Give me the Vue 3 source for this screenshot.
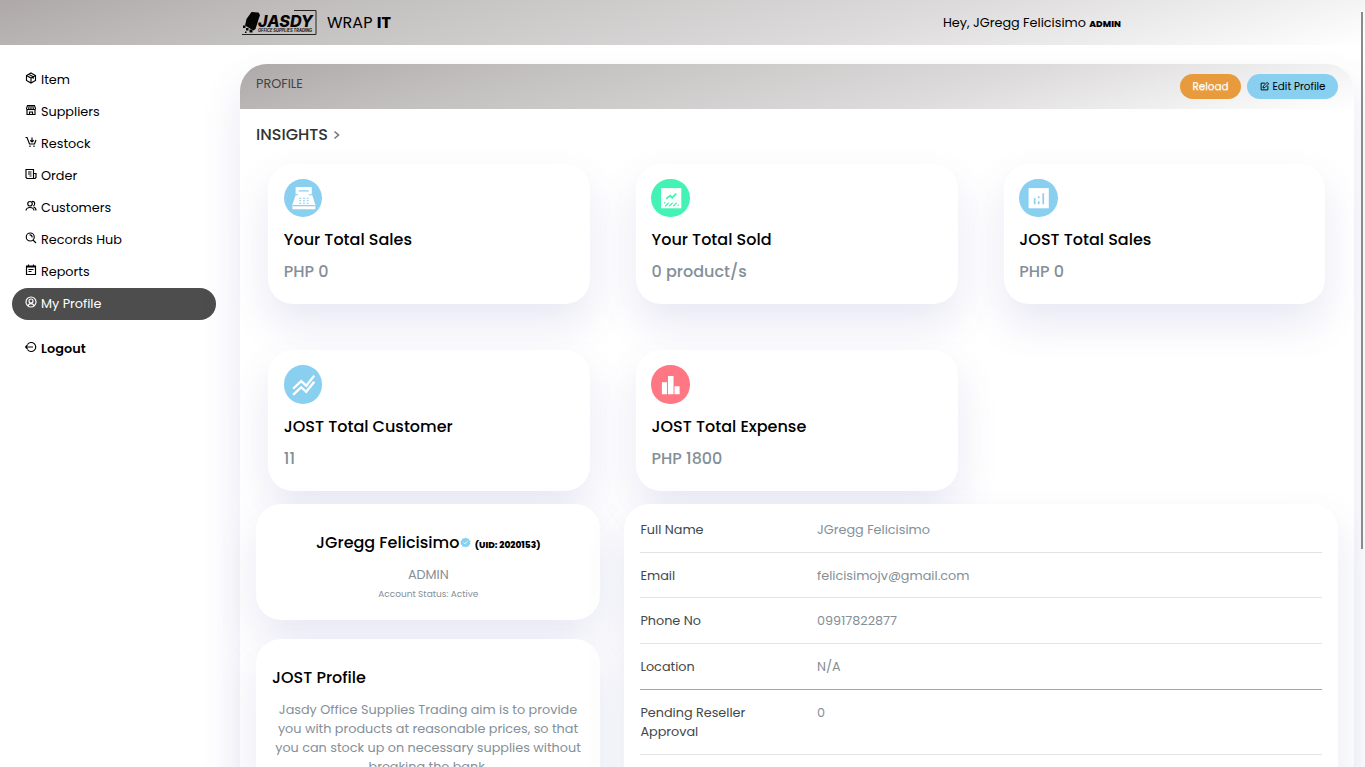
<script setup>
const nav = [
  { label: 'Item', icon: 'box' },
  { label: 'Suppliers', icon: 'store' },
  { label: 'Restock', icon: 'cart' },
  { label: 'Order', icon: 'news' },
  { label: 'Customers', icon: 'users' },
  { label: 'Records Hub', icon: 'search' },
  { label: 'Reports', icon: 'report' },
  { label: 'My Profile', icon: 'user', active: true },
]
const icons = {
  box: 'M12 2 21 7v10l-9 5-9-5V7zM3 7l9 5 9-5M12 12v10M7.500 4.500l9 5v4',
  store: 'M5 3h14l2 6c0 3-4 3-4.500 0 0 3-4.500 3-4.500 0 0 3-4.500 3-4.500 0C7 12 3 12 3 9zM4 12v9h16v-9M9 21v-5h6v5M8.500 3 7.500 9M15.500 3l1 6M12 3v6',
  cart: 'M1 3h3l5 13h10l3-8M14 3v9M10.500 8.500 14 12l3.500-3.500M10 19v3M18 19v3',
  news: 'M2 3h15v18H4l-2-2zM17 11h5v8l-2 2h-5M6 8h7M6 12h7M9 16h4',
  users: 'M10 3a4.500 4.500 0 1 0 0 9 4.500 4.500 0 0 0 0-9M2 21c1-8 15-8 16 0M14 3c6-1 7 6 3 9M17 14c4 1 5 4 5 7',
  search: 'M10.500 2a8 8 0 1 0 0 16 8 8 0 0 0 0-16M16.500 16.500 22 22M9 6c3-1 6 2 5 5',
  report: 'M3 4h18v17H3zM7 1v5M17 1v5M4 6h16M7 11h10M7 15h6',
  user: 'M12 2a10 10 0 1 0 0 20 10 10 0 0 0 0-20M12 6a4 4 0 1 0 0 8 4 4 0 0 0 0-8M6 19c2-5 10-5 12 0',
}
const stats = [
  { title: 'Your Total Sales', value: 'PHP 0', icon: 'register', tone: 'blue' },
  { title: 'Your Total Sold', value: '0 product/s', icon: 'trend', tone: 'green' },
  { title: 'JOST Total Sales', value: 'PHP 0', icon: 'analytics', tone: 'blue' },
  { title: 'JOST Total Customer', value: '11', icon: 'lines', tone: 'blue' },
  { title: 'JOST Total Expense', value: 'PHP 1800', icon: 'bars', tone: 'red' },
]
const details = [
  { label: 'Full Name', value: 'JGregg Felicisimo' },
  { label: 'Email', value: 'felicisimojv@gmail.com' },
  { label: 'Phone No', value: '09917822877' },
  { label: 'Location', value: 'N/A', accent: true },
  { label: 'Pending Reseller Approval', value: '0' },
]
</script>

<template>
  <div class="page">
    <header class="topbar">
      <svg class="logo" viewBox="0 0 76 28">
        <path d="M53 1.500h22v24H1" fill="none" stroke="#222" stroke-width="1" />
        <path d="m5.500 10 5-7 7 .5L19 6l-4.500 14-2 1.500L4 16.500z" fill="#050505" />
        <path d="M2 16.500h2.500V19H2zM5 19h2.500v2.500H5zM8.500 20.500h3v3h-3zM4 22.500h1.500V24H4z" fill="#050505" />
        <text x="17" y="17.500" textLength="55" lengthAdjust="spacingAndGlyphs" class="logo-name">JASDY</text>
        <text x="17" y="23.300" textLength="54" lengthAdjust="spacingAndGlyphs" class="logo-sub">OFFICE SUPPLIES TRADING</text>
      </svg>
      <div class="brand">WRAP <b>IT</b></div>
      <div class="hello">Hey, JGregg Felicisimo <b>ADMIN</b></div>
    </header>

    <div class="main">
      <nav class="side">
        <a v-for="n in nav" :key="n.label" class="link" :class="{ active: n.active }">
          <svg viewBox="0 0 24 24"><path :d="icons[n.icon]" /></svg><span>{{ n.label }}</span>
        </a>
        <a class="link logout">
          <svg viewBox="0 0 24 24"><path d="M5 7a9 9 0 1 1 0 10M1 12h15M5 8l-4 4 4 4" /></svg><span>Logout</span>
        </a>
      </nav>

      <section class="panel">
        <div class="panel-head">
          <span class="panel-title">PROFILE</span>
          <button class="btn reload">Reload</button>
          <button class="btn edit">
            <svg viewBox="0 0 24 24"><path d="M13 3H3v18h18V11M8 16l1-5L19 1l4 4-10 10z" /></svg>Edit Profile
          </button>
        </div>
        <div class="panel-body">
          <h2 class="insights">INSIGHTS
            <svg viewBox="0 0 8 10"><path d="M1.500 1.500 5.500 5l-4 3.500" /></svg>
          </h2>
          <div class="stats">
            <div v-for="s in stats" :key="s.title" class="card stat">
              <span class="disc" :class="s.tone">
                <svg viewBox="0 0 38 38">
                  <template v-if="s.icon === 'register'">
                    <path d="M11.500 8h16v7h-3v1h3.500l3 9.500v4.500H8.300v-4.500L11.500 16H14v-1h-2.500z" fill="#fff" />
                    <path d="M14.500 11.700h10M8.500 26.300h22" stroke="#89cff0" stroke-width="1.200" />
                    <path d="M15 19h10M15 21.500h10M15 24h10" stroke="#89cff0" stroke-width="1.100" stroke-dasharray="2 1.700" />
                  </template>
                  <template v-else-if="s.icon === 'trend'">
                    <path d="M10 9h20v20H10z" fill="#fff" />
                    <path d="m15 19.500 4-3 2 2 4-4" fill="none" stroke="#43f3b6" stroke-width="1.700" />
                    <path d="m13 24 1-1M14 27l3.500-3.500M18 27l3.500-3.500M22 27l3.500-3.500M26.500 26.500l1-1" fill="none" stroke="#43f3b6" stroke-width="1.200" />
                  </template>
                  <template v-else-if="s.icon === 'analytics'">
                    <path d="M9.500 9h20v20h-20z" fill="#fff" />
                    <path d="M15.500 19v6M19.500 22v3M19.500 17v2M24 14v11" stroke="#89cff0" stroke-width="1.700" />
                  </template>
                  <path v-else-if="s.icon === 'lines'" d="m9 23.500 8-7.500 5 4.500 8-10M9 29.500l8-7.500 5 4.500 8-10" fill="none" stroke="#fff" stroke-width="2.300" />
                  <path v-else d="M10.800 17h5v12h-5zM16.800 11h5.500v18h-5.500zM23.300 21h5v8h-5z" fill="#fff" />
                </svg>
              </span>
              <h3>{{ s.title }}</h3>
              <p>{{ s.value }}</p>
            </div>
          </div>

          <div class="lower">
            <div class="left">
              <div class="card person">
                <h3>JGregg Felicisimo<svg viewBox="0 0 24 24"><path d="m12 1 3 2.200 3.700-.2 1 3.600L23 9l-1.200 3L23 15l-3.300 2.400-1 3.600-3.700-.2L12 23l-3-2.200-3.700.2-1-3.600L1 15l1.200-3L1 9l3.300-2.400 1-3.600 3.700.2z" fill="#89cff0" /><path d="m7.500 12 3 3 6-6" fill="none" stroke="#fff" stroke-width="2" /></svg> <b>(UID: 2020153)</b></h3>
                <p class="role">ADMIN</p>
                <p class="status">Account Status: Active</p>
              </div>
              <div class="card about">
                <h3>JOST Profile</h3>
                <p>Jasdy Office Supplies Trading aim is to provide<br />you with products at reasonable prices, so that<br />you can stock up on necessary supplies without<br />breaking the bank.</p>
              </div>
            </div>
            <div class="card details">
              <div v-for="d in details" :key="d.label" class="row" :class="{ accent: d.accent }">
                <span class="label">{{ d.label }}</span><span class="value">{{ d.value }}</span>
              </div>
            </div>
          </div>
        </div>
      </section>
    </div>
    <div class="scroll"></div>
  </div>
</template>

<style>
body { overflow: hidden; }
</style>

<style scoped>
.page { box-sizing: border-box; height: 767px; overflow: hidden; position: relative; background: #fff; color: #000; font: 12.800px/19.200px Poppins, Inter, "Open Sans", sans-serif; }
.page * { box-sizing: border-box; }
h2, h3, p { margin: 0; }
svg { display: block; flex: none; }
.topbar { height: 45px; display: flex; align-items: center; padding-left: 241px; background: linear-gradient(165deg, #aea9a8 0%, #c3c1c0 25%, #dddbdb 64%, #fff 100%); }
.logo { width: 76px; height: 28px; }
.logo-name { font: italic 800 16px Inter, sans-serif; fill: #050505; }
.logo-sub { font: italic 700 4.200px Inter, sans-serif; fill: #111; }
.brand { margin-left: 10px; width: 616px; font-size: 16px; }
.hello { white-space: nowrap; padding-top: 2px; }
.hello b { font-size: 9px; font-weight: 800; }
.main { display: flex; }
.side { width: 240px; flex: none; padding: 19px 24px 0 12px; }
.link { display: flex; align-items: center; height: 32px; padding-left: 13px; border-radius: 16px; gap: 4px; }
.link svg { width: 12px; height: 12px; fill: none; stroke: currentColor; stroke-width: 2.300; margin-bottom: 4px; }
.link span { padding-bottom: 1px; }
.link.active { background: #4d4d4d; color: #fff; }
.link.logout { margin-top: 13px; font-weight: 600; letter-spacing: .1px; }
.panel { width: 1114px; height: 760px; margin-top: 19px; border-radius: 27px 27px 0 0; background: #fff; box-shadow: 0 20px 40px rgba(90, 90, 180, .14); flex: none; }
.panel-head { height: 45px; display: flex; align-items: center; padding: 0 16px; border-radius: 27px 27px 0 0; background: linear-gradient(165deg, #aea9a8 0%, #c3c1c0 25%, #dddbdb 64%, #fff 100%); }
.panel-title { flex: 1; color: #444; position: relative; top: -3px; }
.btn { height: 25px; border: 0; border-radius: 13px; padding: 0; font: 400 10.400px/25px Poppins, Inter, sans-serif; display: flex; align-items: center; justify-content: center; color: #000; }
.reload { width: 61px; margin-right: 6px; background: #e79b3c; color: #fff; text-shadow: 0 1px 1px rgba(255, 255, 255, .5); }
.edit { width: 91px; background: #89cff0; gap: 4px; }
.edit svg { width: 9px; height: 9px; fill: none; stroke: #000; stroke-width: 2.500; }
.panel-body { padding: 0 16px; }
.insights { height: 55px; display: flex; align-items: center; gap: 5px; padding-bottom: 4px; font-size: 16px; font-weight: 500; color: #333; }
.insights svg { width: 8px; height: 10px; fill: none; stroke: #777; stroke-width: 1.600; }
.stats { display: grid; grid-template-columns: repeat(3, 1fr); gap: 46px; padding: 0 12.700px 0 12px; }
.card { background: #fff; border-radius: 25px; box-shadow: 0 20px 40px rgba(90, 90, 180, .14); }
.stat { height: 140.400px; padding: 14.800px 15.600px; }
.disc { display: block; width: 38.400px; height: 38.400px; border-radius: 50%; }
.blue { background: #89cff0; }
.green { background: #43f3b6; }
.red { background: #ff7782; }
h3 { font-size: 16px; line-height: 24px; font-weight: 500; }
.stat h3 { margin-top: 11px; padding-left: .2px; }
.stat p { margin-top: 8px; padding-left: .2px; font-size: 16px; line-height: 24px; font-weight: 500; color: #858f98; }
.lower { display: grid; grid-template-columns: 344px 714px; gap: 24px; margin-top: 13px; }
.left { display: flex; flex-direction: column; gap: 19px; }
.person { height: 116px; padding: 25px 0 0 .6px; text-align: center; }
.person h3 { display: flex; justify-content: center; align-items: center; }
.person svg { width: 11px; height: 11px; margin: 0 4px 0 .5px; }
.person b { font-size: 9px; font-weight: 800; padding-top: 4px; }
.role, .status, .about p { color: #858f98; }
.role { margin-top: 8px; }
.status { margin-top: 1px; font-size: 9px; }
.about { height: 220px; padding: 27px 16px 0; }
.about p { margin-top: 10px; text-align: center; white-space: nowrap; line-height: 19px; }
.details { padding: 16.100px 16px; height: 340px; }
.row { display: flex; border-bottom: 1px solid #e2e3e5; padding-bottom: 12.700px; margin-bottom: 12.800px; }
.row.accent { border-color: #78b4d6; }
.label { width: 177px; padding-left: .4px; padding-right: 60px; color: #42474d; }
.value { color: #858f98; }
.scroll { position: absolute; left: 1361px; top: 12px; width: 2px; height: 537px; background: #8a8a8a; }
</style>
